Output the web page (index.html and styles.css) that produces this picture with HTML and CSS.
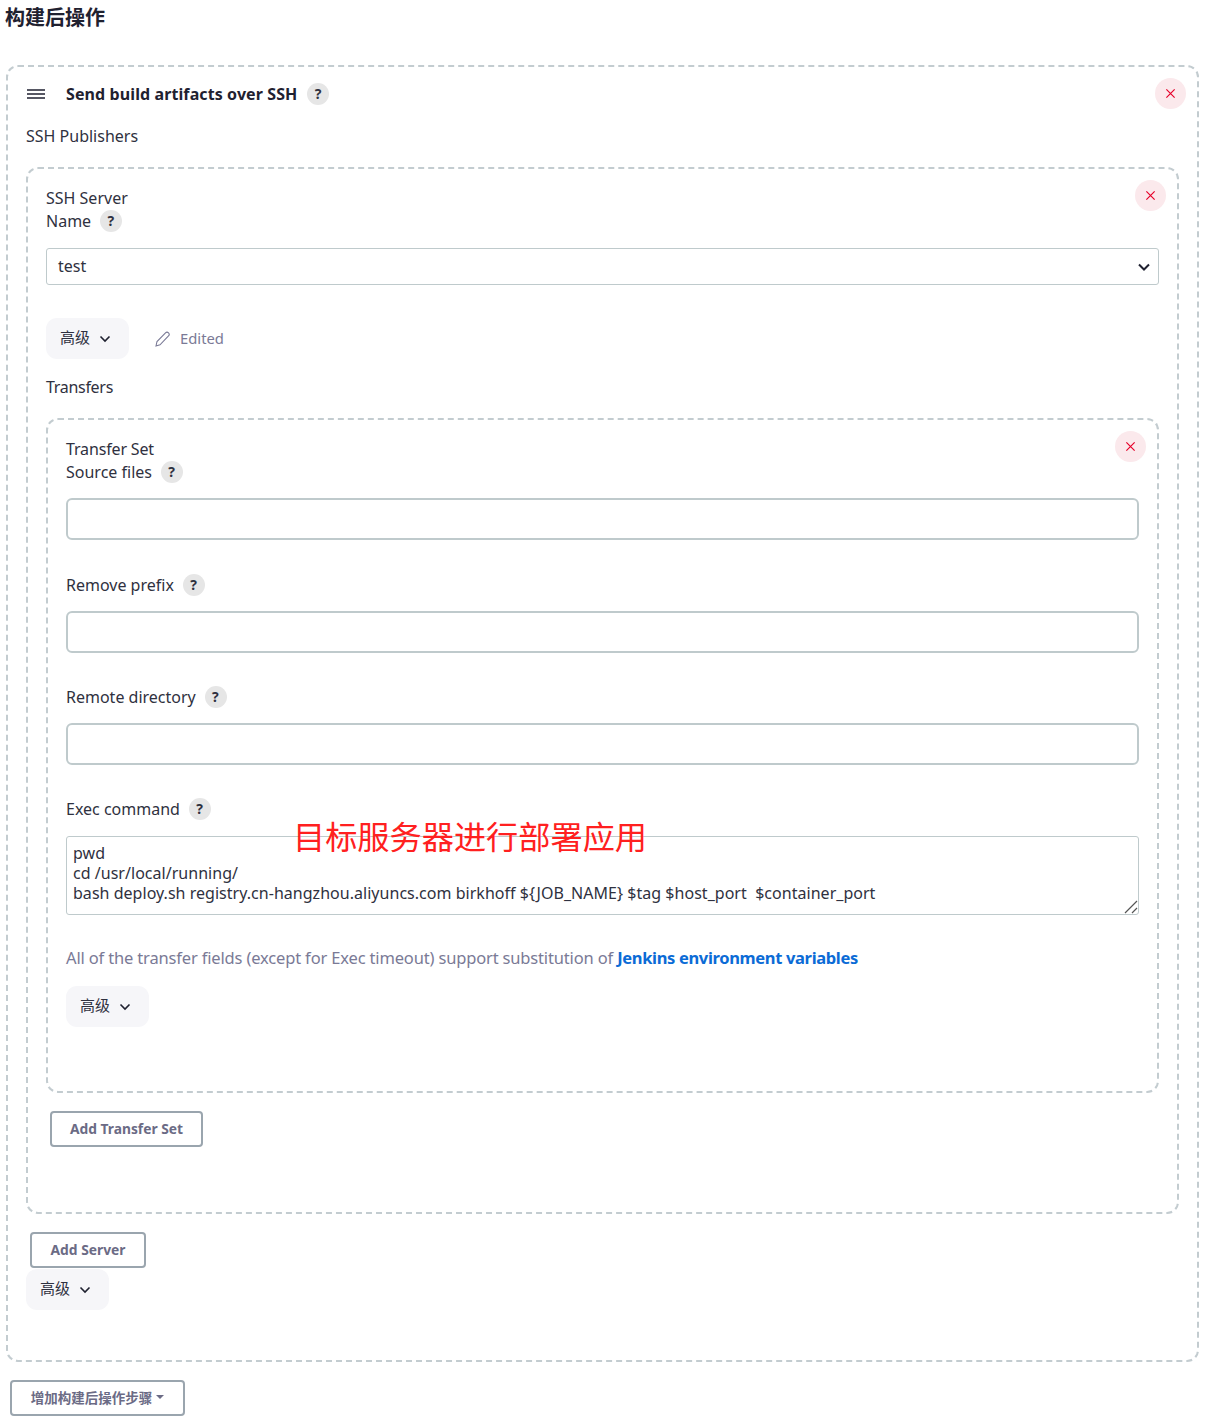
FILE: index.html
```html
<!DOCTYPE html>
<html lang="zh">
<head>
<meta charset="utf-8">
<title>构建后操作</title>
<link rel="stylesheet" href="styles.css">
</head>
<body>
<h2 class="page-title">构建后操作</h2>
<section class="chunk outer">
  <button class="close" aria-label="close"><svg viewBox="0 0 12 12" width="11" height="11"><path d="M1.5 1.5l9 9M10.5 1.5l-9 9"/></svg></button>
  <div class="chunk-head">
    <svg class="grip" viewBox="0 0 18 10" width="18" height="10"><path d="M0 1h18M0 5h18M0 9h18"/></svg>
    <span class="chunk-title">Send build artifacts over SSH</span>
    <span class="help">?</span>
  </div>
  <div class="label publishers">SSH Publishers</div>
  <section class="chunk server">
    <button class="close" aria-label="close"><svg viewBox="0 0 12 12" width="11" height="11"><path d="M1.5 1.5l9 9M10.5 1.5l-9 9"/></svg></button>
    <div class="label">SSH Server</div>
    <div class="label">Name <span class="help">?</span></div>
    <div class="select">
      <span>test</span>
      <svg viewBox="0 0 14 10" width="14" height="10"><path d="M2 2.5l5 5 5-5"/></svg>
    </div>
    <div class="adv-row">
      <button class="adv"><span>高级</span><svg viewBox="0 0 12 8" width="12" height="8"><path d="M1.5 1.5L6 6l4.5-4.5"/></svg></button>
      <span class="edited"><svg viewBox="0 0 16 16" width="16" height="16"><path d="M1 15l1-4.5 8.5-8.6a2 2 0 0 1 3 3L5 13.8z"/></svg>Edited</span>
    </div>
    <div class="label transfers">Transfers</div>
    <section class="chunk transfer">
      <button class="close" aria-label="close"><svg viewBox="0 0 12 12" width="11" height="11"><path d="M1.5 1.5l9 9M10.5 1.5l-9 9"/></svg></button>
      <div class="label set-title">Transfer Set</div>
      <div class="label">Source files <span class="help">?</span></div>
      <div class="input"></div>
      <div class="label field-label first-field">Remove prefix <span class="help">?</span></div>
      <div class="input"></div>
      <div class="label field-label">Remote directory <span class="help">?</span></div>
      <div class="input"></div>
      <div class="label field-label">Exec command <span class="help">?</span></div>
      <div class="textarea-wrap">
        <div class="textarea">pwd
cd /usr/local/running/
bash deploy.sh registry.cn-hangzhou.aliyuncs.com birkhoff ${JOB_NAME} $tag $host_port  $container_port</div>
        <svg class="resize" viewBox="0 0 14 14" width="14" height="14"><path d="M1 13L13 1M8 13l5-5"/></svg>
        <span class="note">目标服务器进行部署应用</span>
      </div>
      <p class="hint">All of the transfer fields (except for Exec timeout) support substitution of <a href="#">Jenkins environment variables</a></p>
      <button class="adv"><span>高级</span><svg viewBox="0 0 12 8" width="12" height="8"><path d="M1.5 1.5L6 6l4.5-4.5"/></svg></button>
    </section>
    <button class="btn add-transfer">Add Transfer Set</button>
  </section>
  <button class="btn add-server">Add Server</button>
  <button class="adv adv-outer"><span>高级</span><svg viewBox="0 0 12 8" width="12" height="8"><path d="M1.5 1.5L6 6l4.5-4.5"/></svg></button>
</section>
<button class="btn add-step">增加构建后操作步骤<span class="caret"></span></button>
</body>
</html>
```
FILE: styles.css
```css
* { box-sizing: border-box; }
html, body { margin: 0; padding: 0; }
body {
  width: 1215px;
  height: 1425px;
  overflow: hidden;
  background: #fff;
  color: #2f3140;
  font-family: "Noto Sans", "Noto Sans CJK SC", sans-serif;
  font-size: 16px;
  line-height: 23px;
}
button { font-family: inherit; cursor: pointer; }
.page-title {
  margin: 0 0 0 5px;
  height: 65px;
  padding-top: 5px;
  font-size: 20px;
  line-height: 25px;
  font-weight: 700;
  color: #1f2130;
}
.chunk {
  position: relative;
  border: 2px dashed #c3ccd0;
  border-radius: 12px;
}
.outer {
  margin-left: 6px;
  width: 1193px;
  height: 1297px;
  padding: 0 18px;
}
.server {
  height: 1047px;
  padding: 18px 18px 0;
  margin-top: 19px;
}
.transfer {
  height: 675px;
  padding: 18px 18px 0;
}
.close {
  position: absolute;
  top: 11px;
  right: 11px;
  width: 31px;
  height: 31px;
  padding: 0;
  border: 0;
  border-radius: 50%;
  background: #fbe9ec;
  display: flex;
  align-items: center;
  justify-content: center;
}
.close svg { fill: none; stroke: #e6002a; stroke-width: 1.3; }
.chunk-head {
  display: flex;
  align-items: center;
  height: 22px;
  margin-top: 16px;
}
.grip { fill: none; stroke: #1f2130; stroke-width: 1.3; margin-left: 1px; }
.chunk-title {
  margin-left: 21px;
  font-weight: 700;
  color: #1f2130;
  letter-spacing: 0.1px;
}
.chunk-head .help { margin-left: 10px; }
.label { color: #2f3140; }
.set-title { letter-spacing: -0.15px; }
.publishers { margin-top: 20px; }
.help {
  display: inline-flex;
  align-items: center;
  justify-content: center;
  width: 22px;
  height: 22px;
  margin-left: 5px;
  padding-right: 1px;
  border-radius: 50%;
  background: #e6e6e6;
  color: #2f3140;
  font-size: 14px;
  font-weight: 700;
  letter-spacing: 0;
  line-height: 22px;
  vertical-align: top;
}
.select {
  display: flex;
  align-items: center;
  justify-content: space-between;
  height: 37px;
  margin-top: 15px;
  padding: 0 7px 0 11px;
  border: 1px solid #bfcacc;
  border-radius: 3px;
}
.select svg { fill: none; stroke: #1f2130; stroke-width: 2; }
.adv-row {
  display: flex;
  align-items: center;
  margin-top: 33px;
}
.adv {
  display: inline-flex;
  align-items: center;
  gap: 9px;
  width: 83px;
  height: 41px;
  padding: 0 0 0 14px;
  border: 0;
  border-radius: 11px;
  background: #f6f6f9;
  color: #2f3140;
  font-size: 15px;
}
.adv span { margin-bottom: 4px; }
.adv svg { fill: none; stroke: #1f2130; stroke-width: 1.6; }
.edited {
  display: inline-flex;
  align-items: center;
  gap: 9px;
  margin-left: 26px;
  color: #7a7a96;
  font-size: 14.8px;
}
.edited svg { fill: none; stroke: #7a7a96; stroke-width: 1.1; }
.transfers { margin-top: 17px; letter-spacing: -0.3px; }
.transfers + .transfer { margin-top: 19px; }
.input {
  height: 42px;
  margin-top: 14px;
  border: 2px solid #bfcacc;
  border-radius: 6px;
}
.field-label { margin-top: 33px; }
.first-field { margin-top: 34px; }
.field-label + .input { margin-top: 14px; }
.textarea-wrap { position: relative; margin-top: 15px; }
.textarea {
  height: 79px;
  padding: 6px 6px 0;
  border: 1px solid #bfcacc;
  border-radius: 3px;
  white-space: pre;
  font-size: 16px;
  line-height: 20px;
  letter-spacing: 0.03px;
  color: #2f3140;
}
.resize {
  position: absolute;
  right: 1px;
  bottom: 1px;
  fill: none;
  stroke: #555;
  stroke-width: 1.2;
}
.note {
  position: absolute;
  left: 227px;
  top: -20px;
  color: #ff2020;
  font-size: 32.2px;
  line-height: 42px;
  white-space: nowrap;
}
.hint {
  margin: 31px 0 16px;
  color: #7a7a96;
  font-size: 16.5px;
  line-height: 24px;
  letter-spacing: -0.16px;
}
.hint a { color: #0b6bd6; font-weight: 700; text-decoration: none; letter-spacing: -0.34px; }
.btn {
  display: block;
  height: 36px;
  padding: 0 0 2px;
  border: 2px solid #9aa5ae;
  border-radius: 4px;
  background: #fff;
  color: #6b6b85;
  font-size: 13.8px;
  font-weight: 700;
}
.add-transfer { width: 153px; margin: 18px 0 0 4px; }
.add-server { width: 116px; margin: 18px 0 0 4px; }
.adv-outer { display: flex; margin-top: 1px; }
.add-step {
  display: flex;
  align-items: center;
  justify-content: center;
  gap: 4px;
  width: 175px;
  margin: 18px 0 0 10px;
  font-size: 13.5px;
}
.caret {
  width: 0;
  height: 0;
  border-left: 4px solid transparent;
  border-right: 4px solid transparent;
  border-top: 4px solid #6b6b85;
}
```
